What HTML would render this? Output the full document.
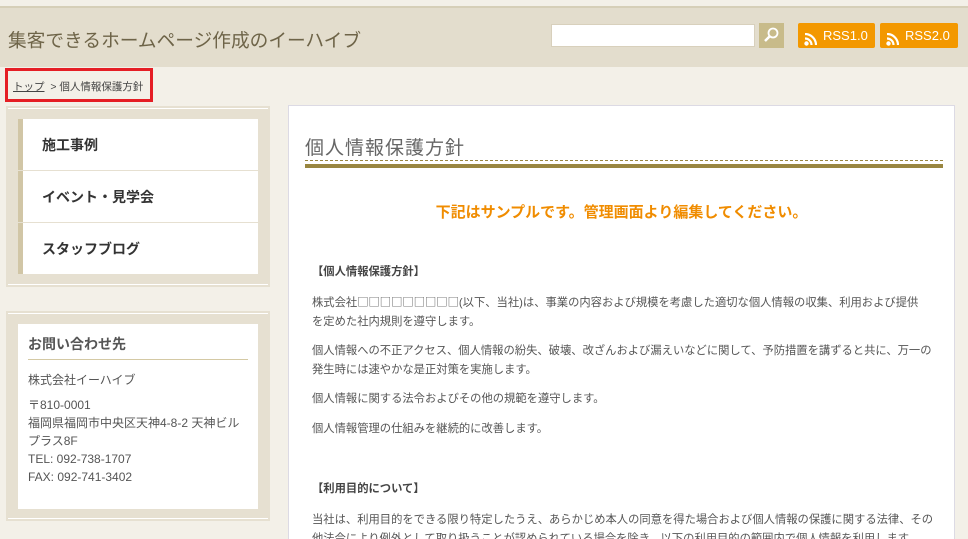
<!DOCTYPE html>
<html><head><meta charset="utf-8">
<style>
*{margin:0;padding:0;box-sizing:border-box}
html,body{width:968px;height:539px;overflow:hidden}
body{background:#f3f0e8;font-family:"Liberation Sans","Noto Sans CJK JP",sans-serif;color:#555;position:relative}
.abs{position:absolute}
#stripe{left:0;top:6px;width:968px;height:2px;background:#d6cfb8}
#hdr{left:0;top:8px;width:968px;height:59px;background:#e3ddcd}
#logo{left:8px;top:26px;font-size:18.7px;color:#6e6448;white-space:nowrap}
#search{left:551px;top:24px;width:204px;height:23px;background:#fff;border:1px solid #d8d0bc}
#sbtn{left:759px;top:23px;width:25px;height:25px;background:#c8bb8a}
.rss{top:23px;height:25px;background:#f39800;border-radius:2px;color:#fff;font-size:13px;line-height:25px;padding-left:25px}
.rss i{position:absolute;left:6px;top:6px;width:13px;height:13px}
#bc{left:5px;top:68px;width:148px;height:34px;border:3px solid #e51e25;font-size:10.5px;color:#444;padding:8px 0 0 5px;white-space:nowrap;overflow:hidden}
#bc u{text-decoration:underline}
.box{background:#e6e0d1;border-top:1px solid #fff;border-bottom:1px solid #fff;outline:2px solid #e6e0d1}
#menu{left:8px;top:108px;width:260px;height:177px}
.mi{position:absolute;left:10px;width:240px;height:51px;background:#fff;border-left:5px solid #d1c6a6;font-size:14px;font-weight:bold;color:#333;padding:16px 0 0 19px}
#contact{left:8px;top:313px;width:260px;height:206px}
#cin{position:absolute;left:10px;top:10px;width:240px;height:185px;background:#fff;padding:10px 10px;font-size:12px;color:#555}
#cin h3{font-size:14px;color:#555;border-bottom:1px solid #d4c9a4;padding-bottom:5px;margin-bottom:11px}
#main{left:288px;top:105px;width:667px;height:450px;background:#fff;border:1px solid #dcdae4}
#ttl{position:absolute;left:16px;top:27px;font-size:19px;color:#666;letter-spacing:1px}
#dash{position:absolute;left:16px;top:54px;width:638px;border-top:1px dashed #998640}
#bar{position:absolute;left:16px;top:58px;width:638px;height:4px;background:#998640}
#note{position:absolute;left:0;width:665px;top:95px;text-align:center;font-size:15px;font-weight:bold;color:#f08c00}
.p{position:absolute;left:23px;width:640px;font-size:11.3px;line-height:19px;color:#555;white-space:nowrap}
.b{font-weight:bold;color:#444}
</style></head><body>
<div class="abs" id="stripe"></div>
<div class="abs" id="hdr"></div>
<div class="abs" id="logo">集客できるホームページ作成のイーハイブ</div>
<div class="abs" id="search"></div>
<div class="abs" id="sbtn"><svg width="25" height="25"><circle cx="14" cy="10" r="4.5" fill="none" stroke="#fff" stroke-width="1.8"/><line x1="11" y1="13" x2="6" y2="18" stroke="#fff" stroke-width="2.5"/></svg></div>
<div class="abs rss" style="left:798px;width:77px"><i><svg width="13" height="13"><circle cx="2.5" cy="10.5" r="2.2" fill="#fff"/><path d="M1 5.5a6.5 6.5 0 0 1 6.5 6.5M1 1a11 11 0 0 1 11 11" fill="none" stroke="#fff" stroke-width="2.2"/></svg></i>RSS1.0</div>
<div class="abs rss" style="left:880px;width:78px"><i><svg width="13" height="13"><circle cx="2.5" cy="10.5" r="2.2" fill="#fff"/><path d="M1 5.5a6.5 6.5 0 0 1 6.5 6.5M1 1a11 11 0 0 1 11 11" fill="none" stroke="#fff" stroke-width="2.2"/></svg></i>RSS2.0</div>
<div class="abs" id="bc"><u>トップ</u>&nbsp;&nbsp;&gt; 個人情報保護方針</div>
<div class="abs box" id="menu">
<div class="mi" style="top:10px">施工事例</div>
<div class="mi" style="top:62px">イベント・見学会</div>
<div class="mi" style="top:114px">スタッフブログ</div>
</div>
<div class="abs box" id="contact"><div id="cin">
<h3>お問い合わせ先</h3>
<div style="margin-bottom:8px">株式会社イーハイブ</div>
<div style="line-height:18px">〒810-0001<br>福岡県福岡市中央区天神4-8-2 天神ビルプラス8F<br>TEL: 092-738-1707<br>FAX: 092-741-3402</div>
</div></div>
<div class="abs" id="main">
<div id="ttl">個人情報保護方針</div>
<div id="dash"></div><div id="bar"></div>
<div id="note">下記はサンプルです。管理画面より編集してください。</div>
<div class="p b" style="top:157px">【個人情報保護方針】</div>
<div class="p" style="top:187px">株式会社<span style="font-family:'Noto Sans CJK JP'">□□□□□□□□□</span>(以下、当社)は、事業の内容および規模を考慮した適切な個人情報の収集、利用および提供<br>を定めた社内規則を遵守します。</div>
<div class="p" style="top:236px">個人情報への不正アクセス、個人情報の紛失、破壊、改ざんおよび漏えいなどに関して、予防措置を講ずると共に、万一の<br>発生時には速やかな是正対策を実施します。</div>
<div class="p" style="top:284px">個人情報に関する法令およびその他の規範を遵守します。</div>
<div class="p" style="top:314px">個人情報管理の仕組みを継続的に改善します。</div>
<div class="p b" style="top:374px">【利用目的について】</div>
<div class="p" style="top:405px">当社は、利用目的をできる限り特定したうえ、あらかじめ本人の同意を得た場合および個人情報の保護に関する法律、その<br>他法令により例外として取り扱うことが認められている場合を除き、以下の利用目的の範囲内で個人情報を利用します。</div>
</div>
</body></html>
